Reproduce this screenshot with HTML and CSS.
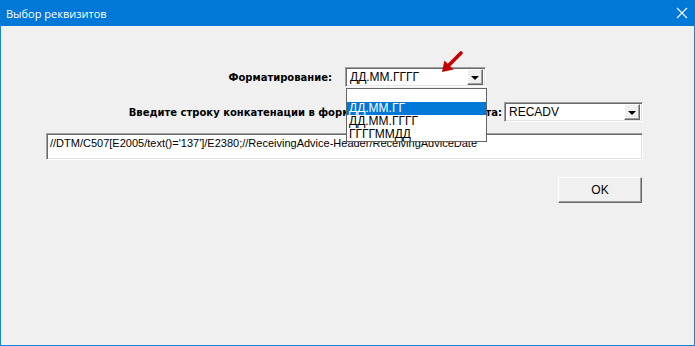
FILE: index.html
```html
<!DOCTYPE html>
<html lang="ru">
<head>
<meta charset="utf-8">
<title>Выбор реквизитов</title>
<link rel="stylesheet" href="styles.css">
</head>
<body>
<div class="window">
  <div class="titlebar">
    <span class="title">Выбор реквизитов</span>
    <svg class="close" width="12" height="12" viewBox="0 0 12 12"><path d="M1 1 L11 11 M11 1 L1 11" stroke="#fff" stroke-width="1.1" fill="none"/></svg>
  </div>
  <div class="content">
    <div class="row row1">
      <label class="lbl lbl1">Форматирование:</label>
      <div class="combo combo1">
        <span class="combo-text">ДД.ММ.ГГГГ</span>
        <span class="combo-btn"><span class="tri"></span></span>
        <ul class="droplist">
          <li class="item"></li>
          <li class="item sel">ДД.ММ.ГГ</li>
          <li class="item">ДД.ММ.ГГГГ</li>
          <li class="item">ГГГГММДД</li>
        </ul>
        <svg class="pointer" width="26" height="26" viewBox="0 0 26 26"><path d="M22 4 L9.5 16.5" stroke="#c40000" stroke-width="3.6" stroke-linecap="round"/><path d="M3 23 L14.6 20.6 L5.4 11.4 Z" fill="#c40000"/></svg>
      </div>
    </div>
    <div class="row row2">
      <label class="lbl lbl2">Введите строку конкатенации в формате XPath для документа:</label>
      <div class="combo combo2">
        <span class="combo-text">RECADV</span>
        <span class="combo-btn"><span class="tri"></span></span>
      </div>
    </div>
    <div class="field">//DTM/C507[E2005/text()='137']/E2380;//ReceivingAdvice-Header/ReceivingAdviceDate</div>
    <div class="btn-ok">OK</div>
  </div>
</div>
</body>
</html>
```
FILE: styles.css
```css
* { box-sizing: border-box; }
html, body { margin: 0; padding: 0; }
body { width: 695px; height: 346px; overflow: hidden; background: #f0f0f0; }

.window {
  width: 695px; height: 346px;
  border: 1px solid #1883d7;
  border-top: none;
  background: #f0f0f0;
  display: flex; flex-direction: column;
}
.titlebar {
  height: 26px; margin: 0 -1px;
  background: #0078d7;
  display: flex; align-items: center; justify-content: space-between;
  padding: 0 6px 0 6px;
  flex: none;
}
.title { color: #fff; font-family: "Open Sans", "Noto Sans", sans-serif; font-size: 11px; }
.close { margin-right: 1px; }

.content { position: relative; display: flex; flex-direction: column; }

.row { display: flex; align-items: center; }
.row1 { margin-top: 41px; }
.row2 { margin-top: 15px; }

.lbl {
  font-family: "DejaVu Sans", sans-serif; font-weight: bold; font-size: 10px;
  color: #000; text-align: right; white-space: nowrap; overflow: hidden;
  display: flex; justify-content: flex-end;
}
.lbl1 { width: 331px; margin-right: 13px; }
.lbl2 { width: 501px; margin-right: 2px; }

.combo {
  position: relative; height: 20px; background: #fff;
  border-top: 1px solid #a0a0a0; border-left: 1px solid #a0a0a0;
  border-right: 1px solid #fff; border-bottom: 1px solid #fff;
  box-shadow: inset 1px 1px 0 #696969, inset -1px -1px 0 #e3e3e3;
  display: flex; align-items: center; justify-content: space-between;
  padding: 2px 2px 2px 4px;
}
.combo1 { width: 141px; }
.combo2 { width: 139px; }
.combo-text { font-family: "Liberation Sans", sans-serif; font-size: 12px; color: #000; }
.combo-btn {
  width: 16px; height: 16px; background: #f0f0f0;
  border-top: 1px solid #fff; border-left: 1px solid #fff;
  border-right: 1px solid #696969; border-bottom: 1px solid #696969;
  box-shadow: inset -1px -1px 0 #a0a0a0;
  display: flex; align-items: center; justify-content: center;
}
.tri { width: 0; height: 0; border-left: 4px solid transparent; border-right: 4px solid transparent; border-top: 4px solid #000; margin-top: 1px; }

.droplist {
  position: absolute; left: 0; top: 20px; width: 141px;
  margin: 0; padding: 0; list-style: none;
  background: #fff; border: 1px solid #646464; z-index: 5;
}
.item {
  height: 13px; line-height: 13px; padding-left: 2px;
  font-family: "Liberation Sans", sans-serif; font-size: 12px; color: #000;
}
.item.sel { background: #0078d7; color: #fff; }

.pointer { position: absolute; left: 93px; top: -19px; z-index: 6; }

.field {
  margin-top: 11px; margin-left: 45px; width: 597px; height: 27px;
  background: #fff;
  border-top: 1px solid #a0a0a0; border-left: 1px solid #a0a0a0;
  border-right: 1px solid #fff; border-bottom: 1px solid #fff;
  box-shadow: inset 1px 1px 0 #696969, inset -1px -1px 0 #e3e3e3;
  font-family: "Liberation Sans", sans-serif; font-size: 11px; color: #000;
  padding: 2px 3px; line-height: 14px; white-space: nowrap; overflow: hidden;
}

.btn-ok {
  margin-top: 17px; margin-left: 557px; width: 84px; height: 26px;
  background: #f0f0f0;
  border-top: 1px solid #fff; border-left: 1px solid #fff;
  border-right: 1px solid #696969; border-bottom: 1px solid #696969;
  box-shadow: inset -1px -1px 0 #a0a0a0;
  display: flex; align-items: center; justify-content: center;
  font-family: "Liberation Sans", sans-serif; font-size: 12px; color: #000;
}
```
